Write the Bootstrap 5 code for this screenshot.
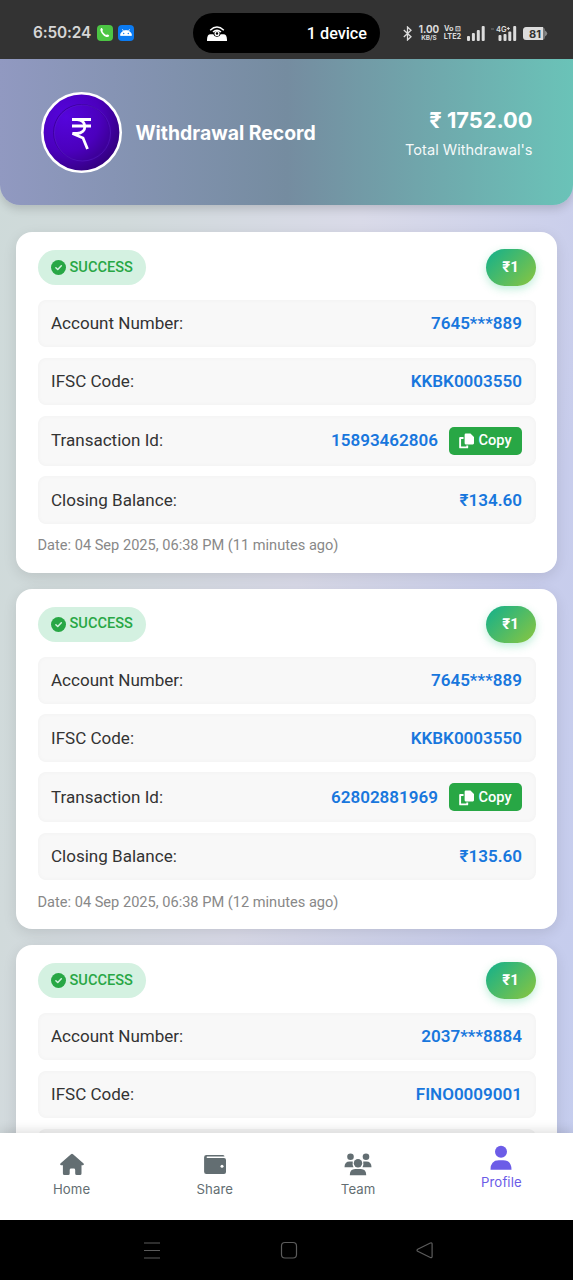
<!DOCTYPE html>
<html lang="en">
<head>
<meta charset="utf-8">
<meta name="viewport" content="width=device-width, initial-scale=1">
<title>Withdrawal Record</title>
<link href="https://cdn.jsdelivr.net/npm/bootstrap@5.3.0/dist/css/bootstrap.min.css" rel="stylesheet">
<style>
body{font-family:Roboto,"Liberation Sans",sans-serif;height:1280px;overflow:hidden;background:#000;color:#333}
svg{display:block;flex:none}
.status-bar{height:59px;background:#333;color:#dcdcdc;padding:7px 0 0}
.status-left{padding-left:33px;width:193px;height:52px}
.clock{font:600 15.4px/1 Inter,sans-serif;letter-spacing:-.15px;color:#d6d6d6;width:64px;white-space:nowrap}
.island{width:187px;height:40px;margin-top:6px;background:#000;border-radius:20px;color:#fff;padding:2px 13px 0 14px;font:500 16.2px/1 Roboto,sans-serif}
.status-right{padding-right:25px;height:52px}
.tiny{font:700 7.5px/8px Inter,sans-serif;text-align:center}
.screen{height:1161px;overflow:hidden;background:linear-gradient(100deg,#cedad9 0%,#d1dadb 20%,#d9dae8 50%,#c8cdec 82%,#c5cdee 100%)}
.hero{height:146px;margin-bottom:27px;padding:0 40.5px 0 41px;background:linear-gradient(90deg,#9199c1 0%,#758ca0 50%,#6ac3b8 100%);border-radius:0 0 20px 20px;box-shadow:0 4px 10px rgba(0,0,0,.15);color:#fff;font-family:Inter,sans-serif}
.hero-title{font-size:19.4px;font-weight:700;margin:3px 0 0 13.500px}
.hero-sum{font-size:21.8px;font-weight:700;line-height:27px;margin-top:4px}
.hero-sub{font-size:14.6px;line-height:21px;margin-top:6.500px;opacity:.93}
.record{background:#fff;border-radius:16px;margin:0 16px 16px;padding:17px 21.500px 0;height:340.5px;box-shadow:0 4px 14px rgba(0,0,0,.1)}
.record-head{margin-bottom:14px}
.state{height:35px;border-radius:18px;background:#d4f1e1;color:#28a745;font-weight:500;font-size:14.6px;padding:0 13.500px 0 13px;gap:4px}
.sum-pill{width:50px;height:37px;border-radius:19px;background:linear-gradient(135deg,#11b08d,#8bc63f);color:#fff;font-weight:700;font-size:15px;box-shadow:0 3px 8px rgba(40,200,130,.3)}
.line{height:47.2px;background:#f8f8f8;box-shadow:inset 0 0 5px rgba(0,0,0,.03);border-radius:8px;padding:1px 13.500px 0;font-size:17.05px;margin-bottom:10.8px}
.line.tall{height:49.7px;padding-top:0}
.val{color:#1877dd;font-weight:600}
.copy{height:28px;width:73px;padding-top:1px;background:#28a745;color:#fff;border-radius:5px;font-weight:500;font-size:14.6px;gap:4px;margin-left:11px}
.stamp{font-size:14.6px;color:#888;line-height:21px;padding-top:.6px;margin-top:2px}
.tabs-bottom{height:87px;background:#fff;position:absolute;left:0;right:0;top:1133px;box-shadow:0 -3px 10px rgba(0,0,0,.12);font:400 13.2px/16px Inter,sans-serif;color:#636e72}
.tabs-bottom a{color:inherit;text-decoration:none;padding-top:19px;gap:5px;flex:1 1 0;letter-spacing:.1px}
.tabs-bottom a.current{color:#6c5ce7;padding-top:12px;gap:4px}
</style>
</head>
<body>
<svg width="0" height="0" class="position-absolute"><defs>
<symbol id="ok" viewBox="0 0 16 16"><circle cx="8" cy="8" r="8" fill="#28a745"/><path d="M5.200 8.200 7.200 10.200 11 6.200" fill="none" stroke="#d4f1e1" stroke-width="1.600" stroke-linecap="round" stroke-linejoin="round"/></symbol>
<symbol id="dup" viewBox="0 0 16 16"><path d="M7.200 0h5L16 3.800v6.700a1.200 1.200 0 0 1-1.200 1.200H7.200A1.200 1.200 0 0 1 6 10.500V1.200A1.200 1.200 0 0 1 7.200 0z" fill="#fff"/><path d="M4.800 4.800H1.200v10h7.600v-2" fill="none" stroke="#fff" stroke-width="2" stroke-linejoin="round"/></symbol>
</defs></svg>

<header class="status-bar">
  <div class="d-flex">
    <div class="d-flex align-items-center status-left">
      <span class="clock">6:50:24</span>
      <svg width="16" height="16" viewBox="0 0 16 16"><rect width="16" height="16" rx="4" fill="#4cc544"/><path d="M4 3.200c.9-.6 1.300.1 1.800 1.300.3.800-.6 1.200-.2 2 .8 1.400 1.700 2.400 3 3.200.8.500 1.200-.5 1.900-.200 1.300.5 2.100.900 1.500 1.700-1.100 1.500-3.700.8-5.800-1.300S2.500 4.700 4 3.200z" fill="#fff"/></svg>
      <svg style="margin-left:5px" width="16" height="16" viewBox="0 0 16 16"><rect width="16" height="16" rx="4" fill="#0b7bf2"/><path d="M2.500 10.400a5.500 4.800 0 0 1 11 0zM4.400 4.200l1.100 2M11.600 4.200l-1.100 2" fill="#fff" stroke="#fff" stroke-width=".8"/><circle cx="5.700" cy="8.500" r=".7" fill="#0b7bf2"/><circle cx="10.300" cy="8.500" r=".7" fill="#0b7bf2"/></svg>
    </div>
    <div class="island d-flex align-items-center justify-content-between">
      <svg width="20" height="16" viewBox="0 0 20 16" fill="none"><path d="M3.200 4.200Q10-2.200 16.800 4.200M6 6Q10 2.400 14 6" stroke="#fff" stroke-width="1.500"/><path d="M0 15q-.2-6.700 3.500-6.700h2.800a3.900 3.900 0 0 0 7.400 0h2.800q3.700 0 3.500 6.700z" fill="#fff"/><circle cx="10" cy="7.600" r="1.900" stroke="#fff" stroke-width="1.300"/></svg>
      <span>1 device</span>
    </div>
    <div class="d-flex align-items-center justify-content-end status-right flex-grow-1">
      <svg width="9" height="15" viewBox="0 0 9 15" fill="none" stroke="#ddd" stroke-width="1.300"><path d="M.8 4 8 10.700 4.500 14V1L8 4.300.8 11"/></svg>
      <div class="tiny" style="margin-left:6px;width:22px"><div style="font-size:9.800px;line-height:9px">1.00</div><div style="font-size:6.400px;line-height:8px">KB/S</div></div>
      <div class="tiny text-nowrap" style="margin-left:3px;width:19px;font-size:7.300px;line-height:8px">Vo ⊡<br>LTE2</div>
      <svg style="margin-left:5px" width="18" height="15" viewBox="0 0 18 15" fill="#ddd"><rect y="10" width="3" height="5" rx="1"/><rect x="4.900" y="7" width="3" height="8" rx="1"/><rect x="9.800" y="4" width="3" height="11" rx="1"/><rect x="14.700" y="0" width="3" height="15" rx="1"/></svg>
      <svg style="margin-left:4px" width="28" height="15" viewBox="0 0 28 15" fill="#ddd"><rect x="9.500" y="9" width="3" height="6" rx="1"/><rect x="14.500" y="8" width="3" height="7" rx="1"/><rect x="19.300" y="5.500" width="3" height="9.500" rx="1"/><rect x="24.200" y="0" width="3" height="15" rx="1"/><path d="M2 3h3" stroke="#777"/><text x="7" y="6" font-family="Inter" font-size="7.500" font-weight="600">4G</text><path d="M17.800 2.500h3M19.300 1v3" stroke="#ddd"/></svg>
      <svg style="margin-left:6px" width="25" height="13" viewBox="0 0 25 13"><rect width="22" height="13" rx="3.500" fill="#777"/><path d="M3.500 0H20v13H3.500A3.500 3.500 0 0 1 0 9.500v-6A3.500 3.500 0 0 1 3.500 0z" fill="#dcdcdc"/><path d="M22 3.500q4.500 3 0 6z" fill="#888"/><text x="12" y="10.500" text-anchor="middle" font-family="Inter" font-size="11" font-weight="700" fill="#333">81</text></svg>
    </div>
  </div>
</header>

<main class="screen">
  <section class="hero d-flex align-items-center">
    <svg width="81" height="81" viewBox="0 0 81 81"><defs><radialGradient id="coin" cx=".3" cy=".3" r=".8"><stop stop-color="#5505dc"/><stop offset=".55" stop-color="#4b00bd"/><stop offset="1" stop-color="#300078"/></radialGradient></defs><circle cx="40.500" cy="40.500" r="39.200" fill="url(#coin)" stroke="#fff" stroke-width="2.600"/><circle cx="40.500" cy="40.500" r="28" fill="none" stroke="#3e009f"/><circle cx="41.500" cy="41" r="28" fill="none" stroke="#5c20c8" stroke-width=".5"/><path d="M31 27.500h19M31 34h19M31 27.500h5c10.500 0 10.500 14 0 14h-4.500l10.500 4.500 4.500 11" fill="none" stroke="#fff" stroke-width="2.800"/></svg>
    <div class="hero-title">Withdrawal Record</div>
    <div class="ms-auto text-end"><div class="hero-sum">₹ 1752.00</div><div class="hero-sub">Total Withdrawal's</div></div>
  </section>

  <article class="record">
    <div class="record-head d-flex justify-content-between align-items-center"><span class="state d-flex align-items-center"><svg width="15" height="15"><use href="#ok"/></svg>SUCCESS</span><span class="sum-pill d-flex align-items-center justify-content-center">₹1</span></div>
    <div class="line d-flex align-items-center justify-content-between"><span>Account Number:</span><span class="val">7645***889</span></div>
    <div class="line d-flex align-items-center justify-content-between"><span>IFSC Code:</span><span class="val">KKBK0003550</span></div>
    <div class="line tall d-flex align-items-center"><span>Transaction Id:</span><span class="val ms-auto">15893462806</span><span class="copy d-flex align-items-center justify-content-center"><svg width="15" height="16"><use href="#dup"/></svg>Copy</span></div>
    <div class="line d-flex align-items-center justify-content-between"><span>Closing Balance:</span><span class="val">₹134.60</span></div>
    <div class="stamp">Date: 04 Sep 2025, 06:38 PM (11 minutes ago)</div>
  </article>

  <article class="record">
    <div class="record-head d-flex justify-content-between align-items-center"><span class="state d-flex align-items-center"><svg width="15" height="15"><use href="#ok"/></svg>SUCCESS</span><span class="sum-pill d-flex align-items-center justify-content-center">₹1</span></div>
    <div class="line d-flex align-items-center justify-content-between"><span>Account Number:</span><span class="val">7645***889</span></div>
    <div class="line d-flex align-items-center justify-content-between"><span>IFSC Code:</span><span class="val">KKBK0003550</span></div>
    <div class="line tall d-flex align-items-center"><span>Transaction Id:</span><span class="val ms-auto">62802881969</span><span class="copy d-flex align-items-center justify-content-center"><svg width="15" height="16"><use href="#dup"/></svg>Copy</span></div>
    <div class="line d-flex align-items-center justify-content-between"><span>Closing Balance:</span><span class="val">₹135.60</span></div>
    <div class="stamp">Date: 04 Sep 2025, 06:38 PM (12 minutes ago)</div>
  </article>

  <article class="record">
    <div class="record-head d-flex justify-content-between align-items-center"><span class="state d-flex align-items-center"><svg width="15" height="15"><use href="#ok"/></svg>SUCCESS</span><span class="sum-pill d-flex align-items-center justify-content-center">₹1</span></div>
    <div class="line d-flex align-items-center justify-content-between"><span>Account Number:</span><span class="val">2037***8884</span></div>
    <div class="line d-flex align-items-center justify-content-between"><span>IFSC Code:</span><span class="val">FINO0009001</span></div>
    <div class="line tall"></div>
  </article>
</main>

<nav class="tabs-bottom d-flex">
  <a href="#" class="d-flex flex-column align-items-center"><svg width="26" height="24" viewBox="0 0 26 24" fill="currentColor"><path d="M12 2.200q1-.9 2 0L24.600 11.500q1 1.500-.8 1.700h-1.300v8.300q0 1.500-1.500 1.500h-3.300q-1.500 0-1.500-1.500v-3.600q0-1.400-1.400-1.400h-2.700q-1.400 0-1.400 1.400v3.600q0 1.500-1.500 1.500H5.400q-1.500 0-1.500-1.500v-8.300H2q-1.600-.3-.6-1.700z"/></svg><span>Home</span></a>
  <a href="#" class="d-flex flex-column align-items-center"><svg width="24" height="24" viewBox="0 0 24 24"><path d="M3.500 3H20q1.500.2 1.500 1.500H4.200q-.6 0-.6.700t.6.700H21q2 0 2 2V20q0 2-2 2H3.300q-2.200 0-2.200-2.200V5.300Q1.100 3 3.500 3z" fill="currentColor"/><circle cx="19" cy="14.300" r="1.500" fill="#fff"/></svg><span>Share</span></a>
  <a href="#" class="d-flex flex-column align-items-center"><svg width="28" height="24" viewBox="0 0 28 24" fill="currentColor"><circle cx="6.500" cy="4.800" r="3.300"/><circle cx="22" cy="4.800" r="3.300"/><path d="M.5 15.300q0-5.800 5.200-5.800h2.700q.8 0 .3 1.300-.5 2.500.8 4.500zM27.500 15.300q0-5.800-5.200-5.800h-2.700q-.8 0-.3 1.300.5 2.500-.8 4.500z"/><path d="M5.800 23.300q0-6.300 5.400-6.300h5.600q5.400 0 5.400 6.300z"/><circle cx="14" cy="11.300" r="4.200"/></svg><span>Team</span></a>
  <a href="#" class="current d-flex flex-column align-items-center"><svg width="22" height="25" viewBox="0 0 22 25" fill="currentColor"><circle cx="11" cy="6.800" r="6"/><path d="M.5 24.800q0-9.500 8.300-9.500h4.400q8.300 0 8.300 9.500z"/></svg><span>Profile</span></a>
</nav>

<footer>
  <svg width="573" height="60" viewBox="0 0 573 60" fill="none" stroke="#5c5c5c" stroke-width="1.200"><path d="M144 23h16M144 30.500h16M144 38h16"/><rect x="281.500" y="22.500" width="15" height="15.500" rx="3.500"/><path d="M417 30.200q0-.6.700-1l12.600-6.200q1.800-.6 1.800 1v12.500q0 1.600-1.800 1l-12.600-6.200q-.7-.4-.7-1.100z"/></svg>
</footer>
<script src="https://cdn.jsdelivr.net/npm/bootstrap@5.3.0/dist/js/bootstrap.bundle.min.js"></script>
</body>
</html>
